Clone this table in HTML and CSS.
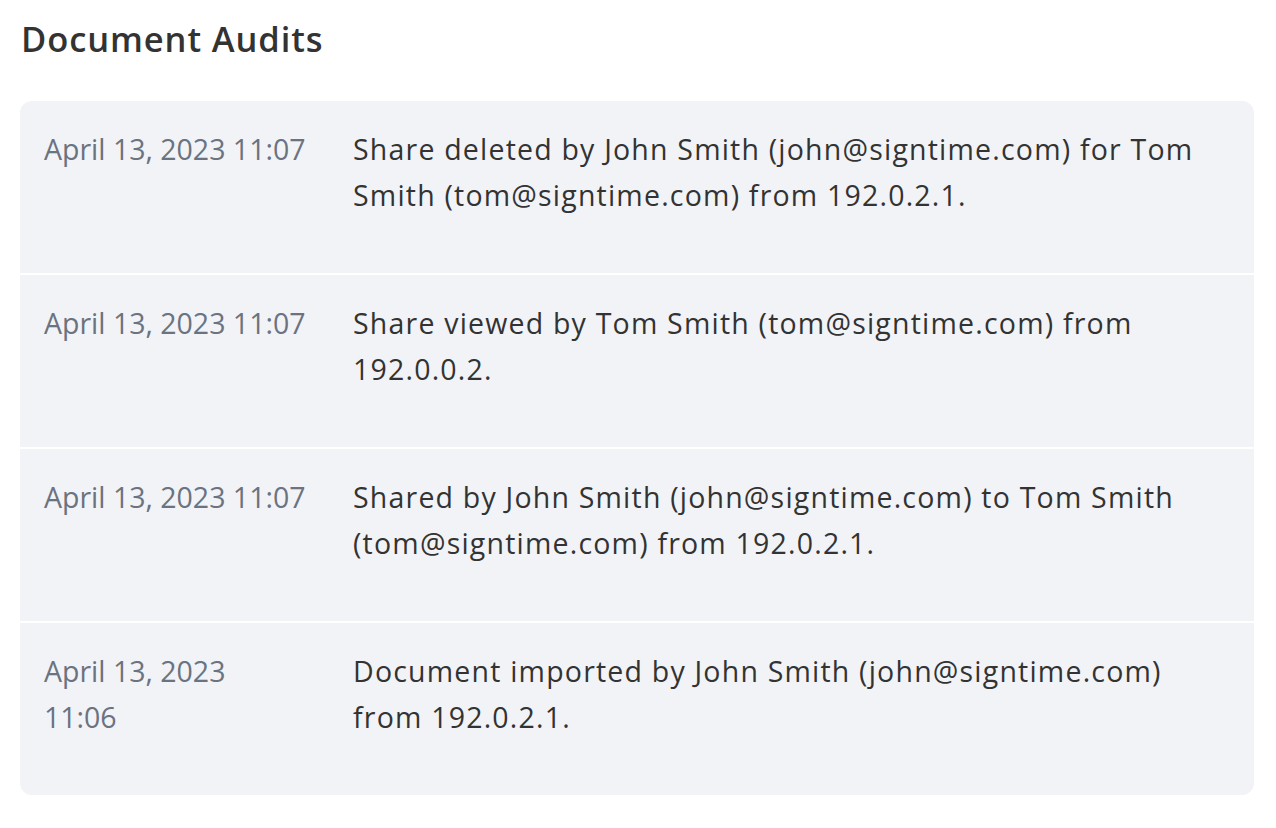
FILE: index.html
```html
<!DOCTYPE html>
<html lang="en">
<head>
<meta charset="utf-8">
<title>Document Audits</title>
<link rel="stylesheet" href="styles.css">
</head>
<body>
<main class="page">
  <h1 class="title">Document Audits</h1>
  <div class="audits">
    <div class="row">
      <div class="date">April 13, 2023 11:07</div>
      <div class="desc">Share deleted by John Smith (john@signtime.com) for Tom Smith (tom@signtime.com) from 192.0.2.1.</div>
    </div>
    <div class="row">
      <div class="date">April 13, 2023 11:07</div>
      <div class="desc">Share viewed by Tom Smith (tom@signtime.com) from 192.0.0.2.</div>
    </div>
    <div class="row">
      <div class="date">April 13, 2023 11:07</div>
      <div class="desc">Shared by John Smith (john@signtime.com) to Tom Smith (tom@signtime.com) from 192.0.2.1.</div>
    </div>
    <div class="row">
      <div class="date"><span class="part">April 13, 2023</span> <span class="part">11:06</span></div>
      <div class="desc">Document imported by John Smith (john@signtime.com) from 192.0.2.1.</div>
    </div>
  </div>
</main>
</body>
</html>
```

FILE: styles.css
```css
html, body {
  margin: 0;
  padding: 0;
  background: #ffffff;
}

body {
  font-family: "Open Sans", "Noto Sans", "Liberation Sans", sans-serif;
  color: #333333;
}

.page {
  padding: 14px 22px 0 20px;
}

.title {
  margin: 0 0 37px 1px;
  font-size: 34.5px;
  line-height: 50px;
  font-weight: 600;
  letter-spacing: 0.9px;
  color: #333333;
}

.audits {
  background: #ffffff;
  border-radius: 12px;
  overflow: hidden;
  display: flex;
  flex-direction: column;
  gap: 2px;
}

.row {
  background: #f2f3f7;
  display: grid;
  grid-template-columns: 285px 1fr;
  gap: 24px;
  padding: 25px 24px 55px 24px;
  font-size: 28.5px;
  line-height: 46px;
}

.date {
  color: #6b7280;
  white-space: nowrap;
}

.date .part {
  display: block;
}

.desc {
  color: #333333;
  letter-spacing: 1.2px;
}
```
